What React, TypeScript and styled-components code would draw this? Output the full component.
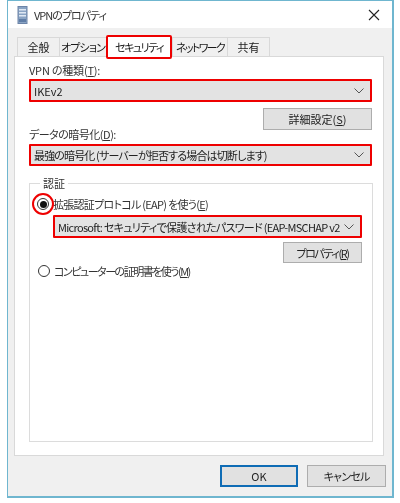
import React, { FC } from "react"
import styled, { createGlobalStyle } from "styled-components"

const GlobalStyle = createGlobalStyle`
  html, body {
    margin: 0;
    padding: 0;
    background: #ffffff;
  }
  body {
    font-family: "Noto Sans CJK JP", "Liberation Sans", sans-serif;
    font-size: 11px;
    color: #1a1a1a;
    font-feature-settings: "palt";
    text-autospace: no-autospace;
  }
`

const Page = styled.div`
  width: 400px;
  height: 503px;
  padding: 0 6px 5px 7px;
  box-sizing: border-box;
  overflow: hidden;
`

const Window = styled.div`
  height: 498px;
  box-sizing: border-box;
  border: 1px solid #6fb6cf;
  border-width: 1px 2px 2px 1px;
  background: #f0f0f0;
  display: flex;
  flex-direction: column;
  filter: blur(0.4px);
`

const TitleBar = styled.div`
  height: 27px;
  flex: none;
  background: #fff;
  display: flex;
  align-items: center;
  padding: 0 12px 0 9px;
  gap: 6px;
`

const Title = styled.span`
  flex: 1;
  letter-spacing: -1px;
  color: #333;
`

const Body = styled.div`
  flex: 1;
  padding: 9px 8px 0 6px;
  display: flex;
  flex-direction: column;
`

const TabRow = styled.div`
  display: flex;
  align-items: flex-end;
  height: 20px;
  padding-left: 3px;
  position: relative;
  z-index: 1;
  margin-bottom: -1px;
`

const Tab = styled.div<{ $w: number; $ls?: number; $active?: boolean }>`
  width: ${(p) => p.$w}px;
  box-sizing: border-box;
  height: ${(p) => (p.$active ? 24 : 20)}px;
  margin-bottom: ${(p) => (p.$active ? -2 : 0)}px;
  display: flex;
  align-items: center;
  justify-content: center;
  white-space: nowrap;
  overflow: hidden;
  letter-spacing: ${(p) => p.$ls ?? 0}px;
  background: ${(p) => (p.$active ? "#fff" : "#f0f0f0")};
  border: ${(p) => (p.$active ? "2px solid #ee0000" : "1px solid #d9d9d9")};
  border-radius: ${(p) => (p.$active ? "2px" : "0")};
  margin-right: ${(p) => (p.$active ? 0 : -1)}px;
  position: relative;
  z-index: ${(p) => (p.$active ? 2 : 0)};
`

const Panel = styled.div`
  height: 400px;
  box-sizing: border-box;
  background: #fff;
  border: 1px solid #d9d9d9;
  padding: 5px 11px 0 14px;
  display: flex;
  flex-direction: column;
`

const Label = styled.div<{ $mt?: number; $ls?: number }>`
  line-height: 16px;
  height: 16px;
  margin-top: ${(p) => p.$mt ?? 0}px;
  letter-spacing: ${(p) => p.$ls ?? 0}px;
  color: #333;
`

const Select = styled.div<{ $h: number; $mt?: number; $ml?: number; $ls?: number }>`
  height: ${(p) => p.$h}px;
  margin-top: ${(p) => p.$mt ?? 0}px;
  margin-left: ${(p) => p.$ml ?? 0}px;
  box-sizing: border-box;
  background: #e3e3e3;
  border: 2px solid #ee0000;
  border-radius: 1px;
  display: flex;
  align-items: center;
  justify-content: space-between;
  padding: 0 6px 0 3px;
  letter-spacing: ${(p) => p.$ls ?? 0}px;
  white-space: nowrap;
  overflow: hidden;
  color: #222;
`

const ButtonRow = styled.div<{ $mt: number }>`
  display: flex;
  justify-content: flex-end;
  margin-top: ${(p) => p.$mt}px;
`

const Button = styled.div<{ $w: number; $h?: number; $ls?: number; $primary?: boolean }>`
  width: ${(p) => p.$w}px;
  height: ${(p) => p.$h ?? 22}px;
  box-sizing: border-box;
  background: #e1e1e1;
  border: ${(p) => (p.$primary ? "2px solid #0f6cb5" : "1px solid #adadad")};
  display: flex;
  align-items: center;
  justify-content: center;
  letter-spacing: ${(p) => p.$ls ?? 0}px;
  color: #222;
`

const Group = styled.fieldset`
  margin: 10px -1px 0 0;
  height: 266px;
  box-sizing: border-box;
  border: 1px solid #dcdcdc;
  padding: 0 10px 0 7px;
  min-width: 0;
`

const Legend = styled.legend`
  padding: 0 3px;
  margin-left: 3px;
  line-height: 14px;
  color: #333;
`

const RadioRow = styled.div<{ $mt: number; $ml?: number; $ls?: number }>`
  display: flex;
  align-items: center;
  gap: 4px;
  height: 16px;
  margin-top: ${(p) => p.$mt}px;
  margin-left: ${(p) => p.$ml ?? 0}px;
  letter-spacing: ${(p) => p.$ls ?? 0}px;
  color: #333;
  white-space: nowrap;
`

const RadioWrap = styled.span`
  position: relative;
  width: 12px;
  height: 12px;
  flex: none;
  box-sizing: border-box;
  border: 1px solid #333;
  border-radius: 50%;
  background: #fff;
  display: flex;
  align-items: center;
  justify-content: center;
`

const RadioDot = styled.span`
  width: 7px;
  height: 7px;
  border-radius: 50%;
  background: #111;
`

const RadioHighlight = styled.span`
  position: absolute;
  left: -6px;
  top: -6px;
  width: 22px;
  height: 22px;
  box-sizing: border-box;
  border: 2px solid #ee0000;
  border-radius: 50%;
`

const Underline = styled.span`
  text-decoration: underline;
`

const Footer = styled.div`
  flex: 1;
  display: flex;
  justify-content: flex-end;
  gap: 9px;
  padding-top: 9px;
  margin-right: -2px;
`

const Chevron: FC = () => (
  <svg width="10" height="6" viewBox="0 0 10 6" style={{ flex: "none" }}>
    <path d="M0.5 0.5 L5 5 L9.5 0.5" fill="none" stroke="#555" strokeWidth="1" />
  </svg>
)

const CloseIcon: FC = () => (
  <svg width="12" height="12" viewBox="0 0 12 12">
    <path d="M1 1 L11 11 M11 1 L1 11" fill="none" stroke="#222" strokeWidth="1.1" />
  </svg>
)

const ServerIcon: FC = () => (
  <svg width="11" height="18" viewBox="0 0 11 18">
    <rect x="1" y="0.5" width="9" height="17" fill="#8aa4c4" stroke="#6c84a8" />
    <rect x="2" y="3" width="7" height="1.5" fill="#dfe8f3" />
    <rect x="2" y="6" width="7" height="1.5" fill="#dfe8f3" />
    <rect x="2" y="9" width="7" height="1.5" fill="#dfe8f3" />
    <rect x="2" y="13" width="7" height="3" fill="#5f7da6" />
  </svg>
)

const App: FC = () => (
  <Page>
    <GlobalStyle />
    <Window>
      <TitleBar>
        <ServerIcon />
        <Title>VPNのプロパティ</Title>
        <CloseIcon />
      </TitleBar>
      <Body>
        <TabRow>
          <Tab $w={43}>全般</Tab>
          <Tab $w={48} $ls={-0.8}>オプション</Tab>
          <Tab $w={66} $ls={-1.5} $active>セキュリティ</Tab>
          <Tab $w={56} $ls={-1.7}>ネットワーク</Tab>
          <Tab $w={43}>共有</Tab>
        </TabRow>
        <Panel>
          <Label $ls={-0.2}>VPN の種類(<Underline>T</Underline>):</Label>
          <Select $h={23} $mt={1}>
            <span>IKEv2</span>
            <Chevron />
          </Select>
          <ButtonRow $mt={6}>
            <Button $w={109}><span>詳細設定(<Underline>S</Underline>)</span></Button>
          </ButtonRow>
          <Label $mt={-4} $ls={-0.5}>データの暗号化(<Underline>D</Underline>):</Label>
          <Select $h={22} $mt={2} $ls={-0.85}>
            <span>最強の暗号化 (サーバーが拒否する場合は切断します)</span>
            <Chevron />
          </Select>
          <Group>
            <Legend>認証</Legend>
            <RadioRow $mt={6} $ls={-0.72}>
              <RadioWrap>
                <RadioDot />
                <RadioHighlight />
              </RadioWrap>
              <span>拡張認証プロトコル (EAP) を使う(<Underline>E</Underline>)</span>
            </RadioRow>
            <Select $h={23} $mt={3} $ml={16} $ls={-0.7}>
              <span>Microsoft: セキュリティで保護されたパスワード (EAP-MSCHAP v2</span>
              <Chevron />
            </Select>
            <ButtonRow $mt={4}>
              <Button $w={79} $h={21} $ls={-1.4}><span>プロパティ(<Underline>R</Underline>)</span></Button>
            </ButtonRow>
            <RadioRow $mt={0} $ml={1} $ls={-1.5}>
              <RadioWrap />
              <span>コンピューターの証明書を使う(<Underline>M</Underline>)</span>
            </RadioRow>
          </Group>
        </Panel>
        <Footer>
          <Button $w={78} $primary>OK</Button>
          <Button $w={79} $ls={-0.8}>キャンセル</Button>
        </Footer>
      </Body>
    </Window>
  </Page>
)

export default App
